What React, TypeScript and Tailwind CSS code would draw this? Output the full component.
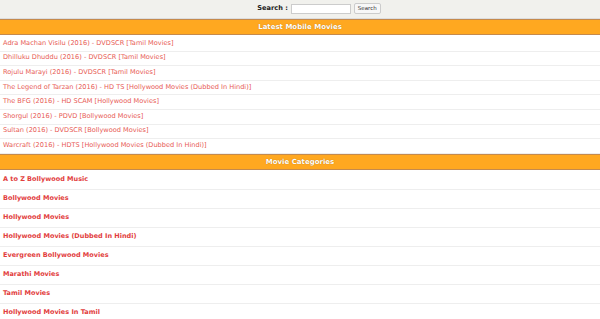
const latest = [
  'Adra Machan Visilu (2016) - DVDSCR [Tamil Movies]',
  'Dhilluku Dhuddu (2016) - DVDSCR [Tamil Movies]',
  'Rojulu Marayi (2016) - DVDSCR [Tamil Movies]',
  'The Legend of Tarzan (2016) - HD TS [Hollywood Movies (Dubbed In Hindi)]',
  'The BFG (2016) - HD SCAM [Hollywood Movies]',
  'Shorgul (2016) - PDVD [Bollywood Movies]',
  'Sultan (2016) - DVDSCR [Bollywood Movies]',
  'Warcraft (2016) - HDTS [Hollywood Movies (Dubbed In Hindi)]',
];

const categories = [
  'A to Z Bollywood Music',
  'Bollywood Movies',
  'Hollywood Movies',
  'Hollywood Movies (Dubbed In Hindi)',
  'Evergreen Bollywood Movies',
  'Marathi Movies',
  'Tamil Movies',
  'Hollywood Movies In Tamil',
];

function SectionHeader({ title }: { title: string }) {
  return (
    <div className="h-[16.5px] bg-[#ffa820] border-y border-[#c58a4c] flex items-center justify-center">
      <span className="text-white font-bold text-[7px] [text-shadow:0_0_1px_#b06a00]">{title}</span>
    </div>
  );
}

export default function App() {
  return (
    <div className="w-[600px] h-[319px] overflow-hidden bg-white font-['DejaVu_Sans',Verdana,sans-serif]">
      {/* Search bar */}
      <div className="h-[18.5px] bg-[#f1f1ed] border-b border-[#ddd] flex items-center justify-center gap-[3px] pl-[38px]">
        <span className="text-[6.6px] font-bold text-[#222]">Search :</span>
        <input
          type="text"
          className="w-[60px] h-[10px] bg-white border border-[#ccc] outline-none"
        />
        <button className="h-[11px] px-[3px] bg-[#f7f7f7] border border-[#ccc] rounded-[2px] text-[5.5px] text-[#333] leading-none">
          Search
        </button>
      </div>

      <SectionHeader title="Latest Mobile Movies" />
      <div className="pt-[2px]">
        {latest.map((t) => (
          <div
            key={t}
            className="h-[14.6px] border-b border-[#eeeeee] flex items-center px-[3px] text-[6.6px] text-[#e85b55]"
          >
            {t}
          </div>
        ))}
      </div>

      <SectionHeader title="Movie Categories" />
      <div className="pt-[1px]">
        {categories.map((t) => (
          <div
            key={t}
            className="h-[19px] border-b border-[#eeeeee] flex items-center px-[3px] text-[6.5px] font-bold text-[#e23d3d]"
          >
            {t}
          </div>
        ))}
      </div>
    </div>
  );
}
